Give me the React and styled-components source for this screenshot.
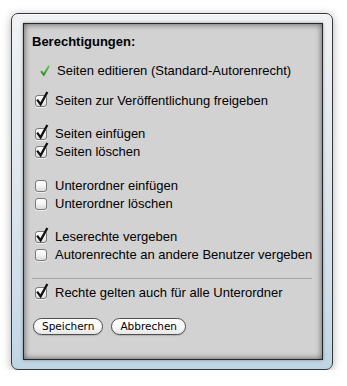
import React from 'react';
import styled, { createGlobalStyle } from 'styled-components';

const GlobalStyle = createGlobalStyle`
  html, body {
    margin: 0;
    padding: 0;
    background: #ffffff;
  }
  body {
    font-family: "Liberation Sans", Arial, sans-serif;
  }
`;

const Window = styled.div`
  box-sizing: border-box;
  width: 322px;
  height: 357px;
  margin: 13px 0 0 11px;
  padding: 9px 9px 9px 11px;
  border: 1px solid #34383c;
  border-radius: 7px;
  background: linear-gradient(to bottom, #f0f2f4 0%, #e2e8ed 40%, #cfdee9 78%, #bfd5e4 100%);
  box-shadow: 0 2px 10px rgba(0, 0, 0, 0.3), inset 0 1px 0 #ffffff;
`;

const Panel = styled.div`
  box-sizing: border-box;
  height: 100%;
  padding: 9.5px 10px 0 8px;
  border: 1px solid #262626;
  background: #d2d2d2;
  box-shadow: inset 0 0 6px rgba(0, 0, 0, 0.6), 0 0 3px rgba(0, 0, 0, 0.35);
  color: #000;
`;

const Title = styled.div`
  font-size: 13px;
  font-weight: bold;
  line-height: 16px;
`;

const Row = styled.div`
  display: flex;
  align-items: center;
  gap: ${({ $plain }) => ($plain ? '7px' : '8px')};
  height: 18px;
  margin-top: ${({ $gap }) => $gap || 0}px;
  padding-left: ${({ $plain }) => ($plain ? '8px' : '3px')};
  font-size: 13px;
  line-height: 18px;
  white-space: nowrap;
`;

const Box = styled.span`
  position: relative;
  box-sizing: border-box;
  flex: none;
  width: 12px;
  height: 12px;
  border: 1px solid #7a7a7a;
  border-radius: 3px;
  background: linear-gradient(to bottom, #ffffff 0%, #f4f4f4 50%, #dadada 100%);
  box-shadow: 0 1px 0 rgba(255, 255, 255, 0.6);
`;

const Tick = styled.svg`
  position: absolute;
  left: 0px;
  top: -4px;
  overflow: visible;
`;

const Divider = styled.div`
  height: 1px;
  margin: 14.5px 0 4.5px;
  background: #a6a6a6;
`;

const Buttons = styled.div`
  display: flex;
  gap: 8px;
  margin-top: 16.5px;
  padding-left: 1px;
`;

const Button = styled.button`
  box-sizing: border-box;
  height: 17px;
  padding: 0 8px;
  border: 1px solid #4e4e4e;
  border-radius: 9px;
  background: linear-gradient(to bottom, #ffffff 0%, #fbfbfb 50%, #e6e6e6 100%);
  font-family: "DejaVu Sans", "Liberation Sans", sans-serif;
  font-size: 10.5px;
  line-height: 15px;
  color: #000;
  box-shadow: 0 1px 1px rgba(0, 0, 0, 0.15);
`;

const Check = ({ checked }) => (
  <Box>
    {checked && (
      <Tick width="12" height="14" viewBox="0 0 12 14">
        <path d="M1.8 8.6 L4.6 12.4 L10.8 1" fill="none" stroke="#111" strokeWidth="2.3" strokeLinecap="square" strokeLinejoin="miter" />
      </Tick>
    )}
  </Box>
);

const GreenTick = () => (
  <svg width="10" height="12" viewBox="0 0 10 12">
    <defs>
      <linearGradient id="gt" x1="0" y1="0" x2="0" y2="1">
        <stop offset="0" stopColor="#62c94e" />
        <stop offset="1" stopColor="#1f8a1a" />
      </linearGradient>
    </defs>
    <path d="M0.2 6.8 L2 5.4 L3.6 8 L8.4 0.2 L9.8 1.2 L3.9 11.6 Z" fill="url(#gt)" />
  </svg>
);

const Option = ({ checked, gap, children }) => (
  <Row $gap={gap}>
    <Check checked={checked} />
    <span>{children}</span>
  </Row>
);

export default function App() {
  return (
    <>
      <GlobalStyle />
      <Window>
        <Panel>
          <Title>Berechtigungen:</Title>
          <Row $plain $gap={12}>
            <GreenTick />
            <span>Seiten editieren (Standard-Autorenrecht)</span>
          </Row>
          <Option checked gap={12}>Seiten zur Veröffentlichung freigeben</Option>
          <Option checked gap={15}>Seiten einfügen</Option>
          <Option checked>Seiten löschen</Option>
          <Option gap={16}>Unterordner einfügen</Option>
          <Option>Unterordner löschen</Option>
          <Option checked gap={15}>Leserechte vergeben</Option>
          <Option>Autorenrechte an andere Benutzer vergeben</Option>
          <Divider />
          <Option checked>Rechte gelten auch für alle Unterordner</Option>
          <Buttons>
            <Button>Speichern</Button>
            <Button>Abbrechen</Button>
          </Buttons>
        </Panel>
      </Window>
    </>
  );
}
